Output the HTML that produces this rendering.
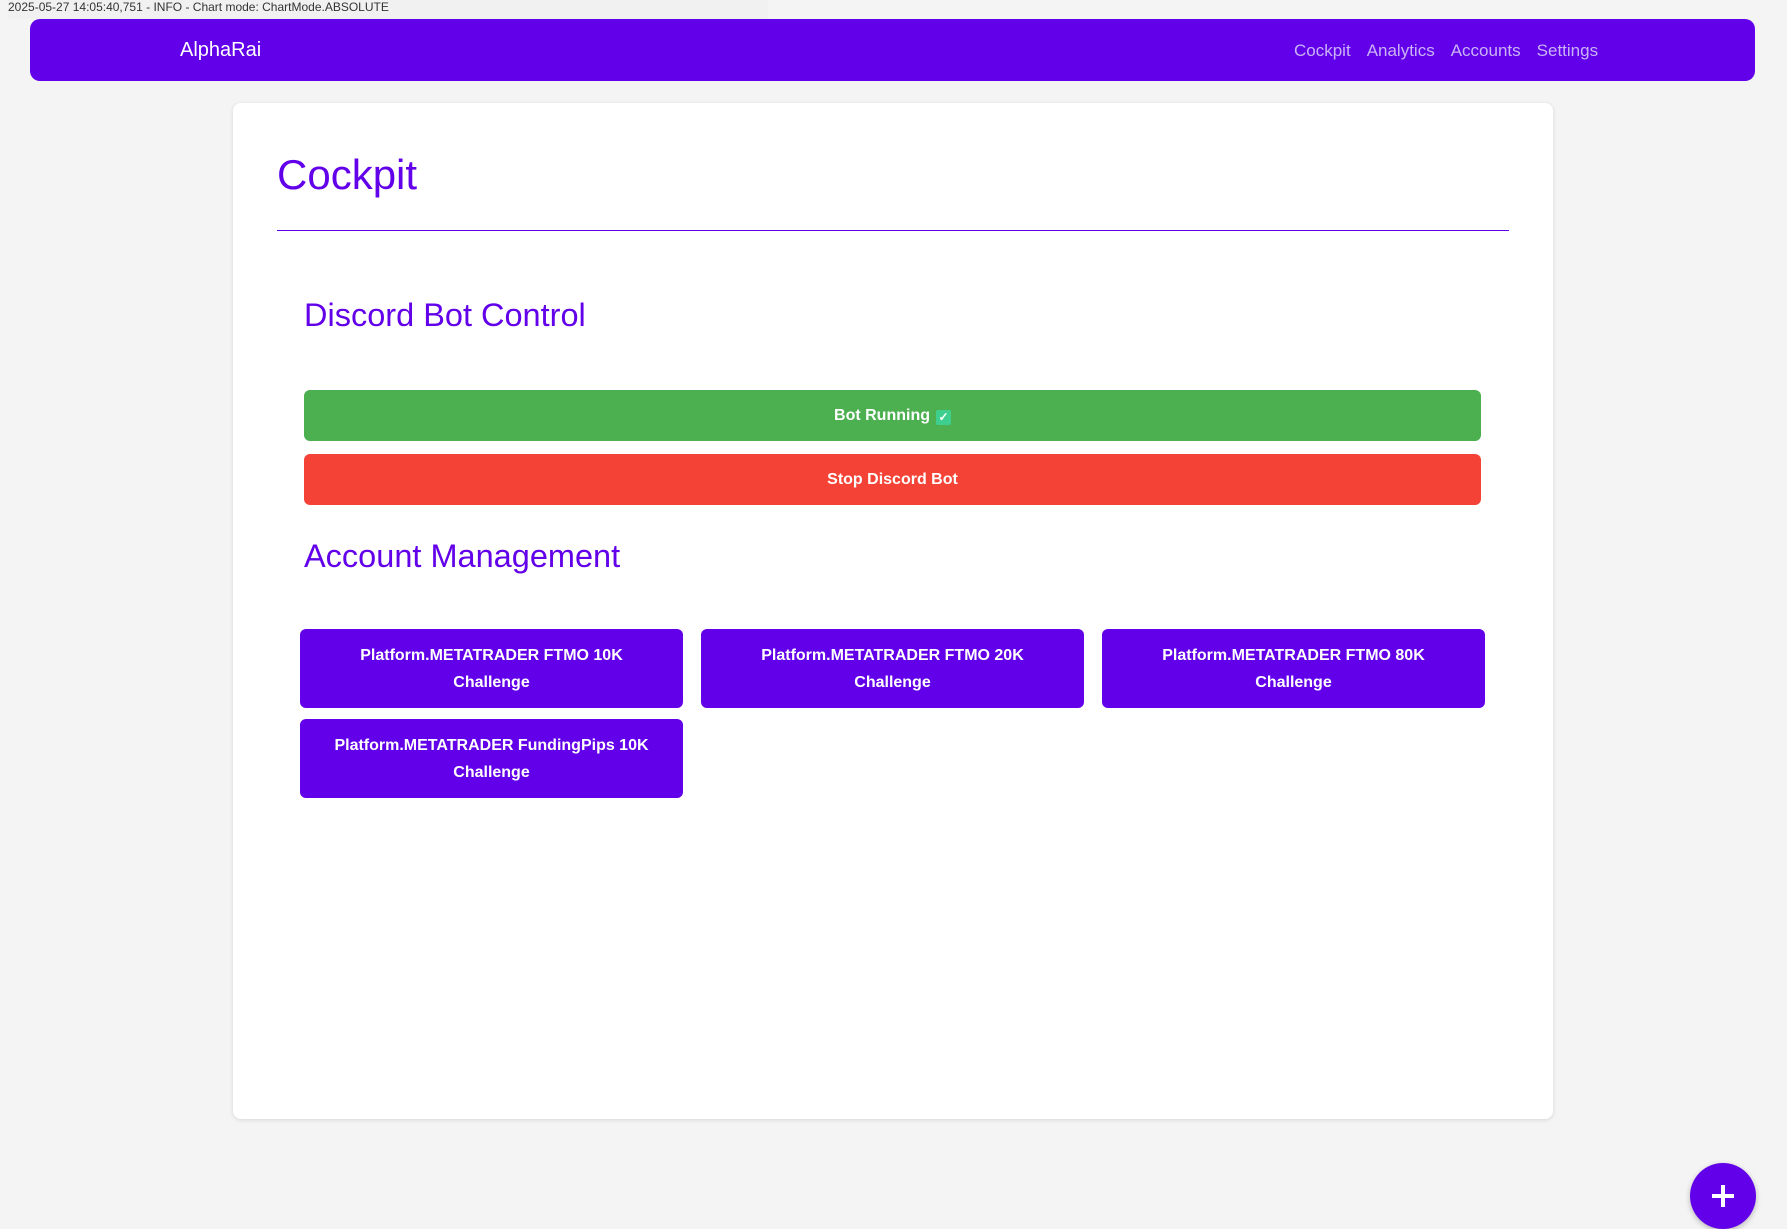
<!DOCTYPE html>
<html><head><meta charset="utf-8"><style>
*{box-sizing:border-box;margin:0;padding:0}
body{width:1787px;height:1193px;background:#f4f4f4;font-family:"Liberation Sans",sans-serif;position:relative;overflow:hidden}
.log{position:absolute;left:8px;top:0;height:19px;width:760px;background:#f1f1f1;font-size:12px;line-height:14px;color:#333}
.nav{position:absolute;left:30px;top:19px;width:1725px;height:62px;background:#6200ea;border-radius:10px}
.brand{position:absolute;left:150px;top:0;line-height:62px;color:#fff;font-size:20px}
.links{position:absolute;left:1264px;top:1px;line-height:62px;font-size:17px;color:#c9b3f5}
.links span{margin-right:16px}
.card{position:absolute;left:233px;top:103px;width:1320px;height:1016px;background:#fff;border-radius:8px;box-shadow:0 1px 4px rgba(0,0,0,.12)}
h1{position:absolute;left:44px;top:48px;font-size:42px;font-weight:normal;color:#6200ea}
.hr{position:absolute;left:44px;top:127px;width:1232px;height:1px;background:#6200ea}
h2{position:absolute;left:71px;font-size:32.5px;font-weight:normal;color:#6200ea}
.btn{position:absolute;left:71px;width:1177px;height:51px;border-radius:6px;color:#fff;font-weight:bold;font-size:16px;text-align:center;line-height:51px}
.acc{position:absolute;width:383px;height:79px;background:#6200ea;border-radius:6px;color:#fff;font-weight:bold;font-size:16px;text-align:center;line-height:27px;padding-top:13px}
.chk{display:inline-block;width:15px;height:15px;background:#3ecf8e;border-radius:2px;color:#fff;font-size:12px;line-height:15px;vertical-align:-1px;margin-left:6px}
.fab{position:absolute;left:1690px;top:1163px;width:66px;height:66px;border-radius:50%;background:#6200ea;box-shadow:0 2px 6px rgba(0,0,0,.25)}
.fab:after{content:"";position:absolute;left:31px;top:22px;width:4px;height:22px;background:#fff}
.fab:before{content:"";position:absolute;left:22px;top:31px;width:22px;height:4px;background:#fff}
</style></head><body>
<div class="log">2025-05-27 14:05:40,751 - INFO - Chart mode: ChartMode.ABSOLUTE</div>
<div class="nav"><div class="brand">AlphaRai</div><div class="links"><span>Cockpit</span><span>Analytics</span><span>Accounts</span><span>Settings</span></div></div>
<div class="card">
<h1>Cockpit</h1>
<div class="hr"></div>
<h2 style="top:194px">Discord Bot Control</h2>
<div class="btn" style="top:287px;background:#4caf50">Bot Running<span class="chk">✓</span></div>
<div class="btn" style="top:351px;background:#f44336">Stop Discord Bot</div>
<h2 style="top:435px">Account Management</h2>
<div class="acc" style="left:67px;top:526px">Platform.METATRADER FTMO 10K<br>Challenge</div>
<div class="acc" style="left:468px;top:526px">Platform.METATRADER FTMO 20K<br>Challenge</div>
<div class="acc" style="left:869px;top:526px">Platform.METATRADER FTMO 80K<br>Challenge</div>
<div class="acc" style="left:67px;top:616px">Platform.METATRADER FundingPips 10K<br>Challenge</div>
</div>
<div class="fab"></div>
</body></html>
